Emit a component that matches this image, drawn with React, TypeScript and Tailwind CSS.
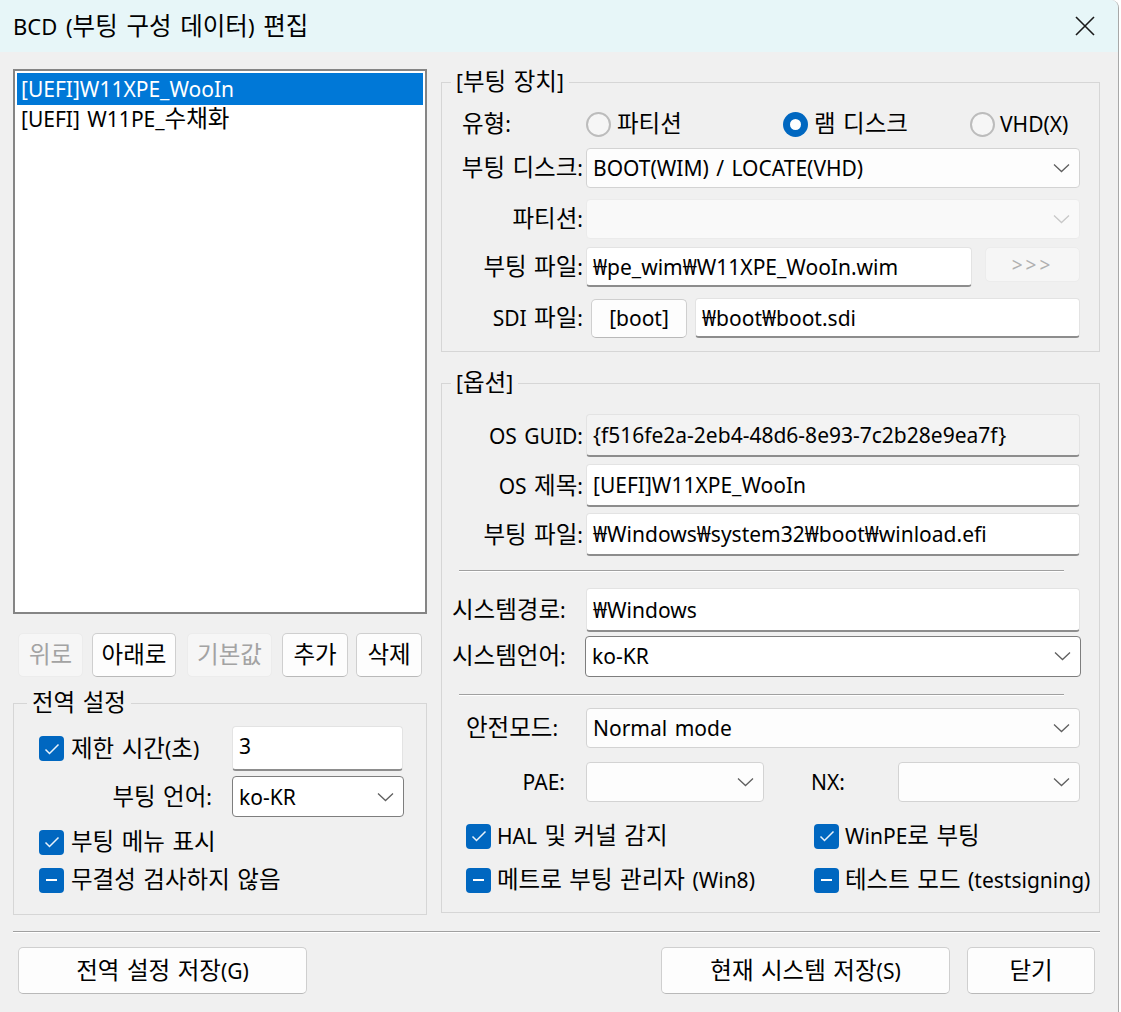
import React from "react";

const HANGUL = /([\u1100-\u11FF\u3130-\u318F\uAC00-\uD7AF]+)/;

function T({ s, k = "text-[23.5px] leading-[20px]" }: { s: string; k?: string }) {
  const parts = s.split(HANGUL);
  return (
    <span className="whitespace-nowrap">
      {parts.map((p, i) =>
        i % 2 === 1 ? (
          <span key={i} className={k}>
            {p}
          </span>
        ) : (
          <React.Fragment key={i}>{p}</React.Fragment>
        )
      )}
    </span>
  );
}

function Chevron({ disabled = false }: { disabled?: boolean }) {
  return (
    <svg width="17" height="10" viewBox="0 0 17 10" className="shrink-0">
      <path
        d="M1 1.5 L8.5 8.5 L16 1.5"
        fill="none"
        stroke={disabled ? "#c8c8c8" : "#5f5f5f"}
        strokeWidth="1.3"
      />
    </svg>
  );
}

function Check({ state }: { state: "checked" | "mixed" }) {
  return (
    <span className="w-[25px] h-[25px] rounded-[4px] bg-[#0067c0] flex items-center justify-center shrink-0">
      {state === "checked" ? (
        <svg width="16" height="12" viewBox="0 0 16 12">
          <path d="M1.5 6.5 L5.5 10.5 L14.5 1.5" fill="none" stroke="#eaf3fb" strokeWidth="1.5" />
        </svg>
      ) : (
        <span className="w-[11px] h-[2px] bg-white" />
      )}
    </span>
  );
}

function Radio({ checked = false }: { checked?: boolean }) {
  return checked ? (
    <span className="w-[25px] h-[25px] rounded-full bg-[#0067c0] flex items-center justify-center shrink-0">
      <span className="w-[11px] h-[11px] rounded-full bg-white" />
    </span>
  ) : (
    <span className="w-[25px] h-[25px] rounded-full border-2 border-[#bcbcbc] bg-[#f6f6f6] shrink-0" />
  );
}

function Combo({
  value = "",
  disabled = false,
  focus = false,
  className = "",
}: {
  value?: string;
  disabled?: boolean;
  focus?: boolean;
  className?: string;
}) {
  const border = disabled
    ? "border-[#ebebeb] bg-[#f9f9f9]"
    : focus
    ? "border-[#7e7e7e] bg-white"
    : "border-[#d3d3d3] bg-[#fdfdfd]";
  return (
    <div
      className={`flex items-center justify-between border rounded-[4px] pl-[6px] pr-[9px] ${border} ${className}`}
    >
      <span className="whitespace-nowrap">{value}</span>
      <Chevron disabled={disabled} />
    </div>
  );
}

function TextBox({
  value = "",
  readOnly = false,
  className = "",
}: {
  value?: string;
  readOnly?: boolean;
  className?: string;
}) {
  return (
    <div
      className={`flex items-center border border-[#e3e3e3] border-b-2 border-b-[#8d8d8d] rounded-[4px] pl-[6px] ${
        readOnly ? "bg-[#f3f3f3]" : "bg-white"
      } ${className}`}
    >
      <span className="whitespace-nowrap">{value}</span>
    </div>
  );
}

function Btn({
  children,
  disabled = false,
  className = "",
}: {
  children: React.ReactNode;
  disabled?: boolean;
  className?: string;
}) {
  return (
    <div
      className={`flex items-center justify-center rounded-[5px] border whitespace-nowrap ${
        disabled
          ? "bg-[#f6f6f6] border-[#ececec] text-[#a3a3a3]"
          : "bg-[#fdfdfd] border-[#cfcfcf] border-b-[#b9b9b9] text-black"
      } ${className}`}
    >
      <span>{children}</span>
    </div>
  );
}

function Sep({ className = "" }: { className?: string }) {
  return <div className={`h-[2px] border-t border-t-[#a0a0a0] border-b border-b-white ${className}`} />;
}

function Label({ s, className = "" }: { s: string; className?: string }) {
  return (
    <div className={`whitespace-nowrap shrink-0 ${className}`}>
      <T s={s} />
    </div>
  );
}

export default function App() {
  return (
    <div className="w-[1121px] h-[1012px] bg-white overflow-hidden">
      <div className="w-[1119px] h-[1012px] bg-[#f0f0f0] border-r border-r-[#a8a8a8] rounded-tr-[8px] overflow-hidden flex flex-col text-[21px] leading-[26px] [word-spacing:2px] text-black font-['Noto_Sans','Noto_Sans_CJK_KR',sans-serif]">
        {/* Title bar */}
        <div className="h-[52px] shrink-0 bg-[#e7f6f8] flex items-center justify-between pl-[13px] pr-[23px]">
          <span className="text-[22px] leading-[28px] whitespace-nowrap [word-spacing:3px]">
            <T s="BCD (부팅 구성 데이터) 편집" k="text-[24.5px] leading-[22px]" />
          </span>
          <svg width="20" height="20" viewBox="0 0 20 20">
            <path d="M1 1 L19 19 M19 1 L1 19" stroke="#1a1a1a" strokeWidth="1.6" fill="none" />
          </svg>
        </div>

        {/* Body */}
        <div className="flex items-start pl-[13px] pt-[17px] h-[863px] shrink-0">
          {/* Left column */}
          <div className="w-[414px] flex flex-col">
            <div className="h-[545px] border-2 border-[#858585] bg-white p-[2px] flex flex-col">
              <div className="h-[32px] bg-[#0078d7] text-white flex items-center pl-[4px] whitespace-nowrap">
                [UEFI]W11XPE_WooIn
              </div>
              <div className="h-[28px] flex items-center pl-[4px] whitespace-nowrap">
                <T s="[UEFI] W11PE_수채화" />
              </div>
            </div>

            <div className="flex mt-[19px] h-[44px] pl-[5px]">
              <Btn disabled className="w-[65px]"><T s="위로" /></Btn>
              <Btn className="w-[84px] ml-[9px]"><T s="아래로" /></Btn>
              <Btn disabled className="w-[85px] ml-[11px]"><T s="기본값" /></Btn>
              <Btn className="w-[66px] ml-[10px]"><T s="추가" /></Btn>
              <Btn className="w-[66px] ml-[8px]"><T s="삭제" /></Btn>
            </div>

            <fieldset className="mt-[14px] border border-[#d6d6d6] p-0 m-0 min-w-0">
              <legend className="ml-[13px] px-[5px] leading-[25px]"><T s="전역 설정" /></legend>
              <div className="flex flex-col pb-[19px]">
                <div className="flex items-center h-[45px] mt-[10px]">
                  <div className="w-[218px] flex items-center pl-[25px]">
                    <Check state="checked" />
                    <Label s="제한 시간(초)" className="ml-[7px]" />
                  </div>
                  <TextBox value="3" className="w-[171px] h-[45px] items-start pt-[6px]" />
                </div>
                <div className="flex items-center h-[41px] mt-[5px]">
                  <Label s="부팅 언어:" className="w-[218px] text-right pr-[20px]" />
                  <Combo value="ko-KR" focus className="w-[172px] h-[41px]" />
                </div>
                <div className="flex items-center h-[30px] mt-[10px] pl-[25px]">
                  <Check state="checked" />
                  <Label s="부팅 메뉴 표시" className="ml-[7px]" />
                </div>
                <div className="flex items-center h-[30px] mt-[8px] pl-[25px]">
                  <Check state="mixed" />
                  <Label s="무결성 검사하지 않음" className="ml-[7px]" />
                </div>
              </div>
            </fieldset>
          </div>

          {/* Right column */}
          <div className="w-[659px] ml-[14px] flex flex-col mt-[1px]">
            <fieldset className="border border-[#d6d6d6] p-0 m-0 min-w-0">
              <legend className="ml-[9px] px-[5px] leading-[25px]"><T s="[부팅 장치]" /></legend>
              <div className="flex flex-col pb-[13px] pr-[19px]">
                <div className="flex items-center h-[40px] mt-[9px]">
                  <Label s="유형:" className="w-[144px] pl-[20px]" />
                  <div className="w-[197px] flex items-center shrink-0">
                    <Radio />
                    <Label s="파티션" className="ml-[6px]" />
                  </div>
                  <div className="w-[187px] flex items-center shrink-0">
                    <Radio checked />
                    <Label s="램 디스크" className="ml-[6px]" />
                  </div>
                  <div className="flex items-center">
                    <Radio />
                    <Label s="VHD(X)" className="ml-[5px]" />
                  </div>
                </div>
                <div className="flex items-center h-[40px] mt-[4px]">
                  <Label s="부팅 디스크:" className="w-[144px] text-right pr-[3px]" />
                  <Combo value="BOOT(WIM) / LOCATE(VHD)" className="flex-1 h-[40px]" />
                </div>
                <div className="flex items-center h-[40px] mt-[11px]">
                  <Label s="파티션:" className="w-[144px] text-right pr-[3px]" />
                  <Combo disabled className="flex-1 h-[40px]" />
                </div>
                <div className="flex items-start h-[40px] mt-[8px]">
                  <div className="w-[144px] h-[40px] flex items-center justify-end pr-[3px] whitespace-nowrap shrink-0">
                    <T s="부팅 파일:" />
                  </div>
                  <TextBox value="₩pe_wim₩W11XPE_WooIn.wim" className="w-[386px] h-[40px]" />
                  <Btn disabled className="w-[95px] h-[35px] ml-[13px] text-[19px] tracking-[3px] text-[#b0b0b0]">&gt;&gt;&gt;</Btn>
                </div>
                <div className="flex items-center h-[40px] mt-[11px]">
                  <Label s="SDI 파일:" className="w-[144px] text-right pr-[3px]" />
                  <Btn className="w-[96px] h-[39px] ml-[5px]">[boot]</Btn>
                  <TextBox value="₩boot₩boot.sdi" className="flex-1 h-[40px] ml-[8px]" />
                </div>
              </div>
            </fieldset>

            <fieldset className="mt-[19px] border border-[#d6d6d6] p-0 m-0 min-w-0">
              <legend className="ml-[9px] px-[5px] leading-[25px]"><T s="[옵션]" /></legend>
              <div className="flex flex-col pb-[17px] pr-[19px]">
                <div className="flex items-center h-[43px] mt-[18px]">
                  <Label s="OS GUID:" className="w-[144px] text-right pr-[3px]" />
                  <TextBox readOnly value="{f516fe2a-2eb4-48d6-8e93-7c2b28e9ea7f}" className="flex-1 h-[43px]" />
                </div>
                <div className="flex items-center h-[43px] mt-[7px]">
                  <Label s="OS 제목:" className="w-[144px] text-right pr-[3px]" />
                  <TextBox value="[UEFI]W11XPE_WooIn" className="flex-1 h-[43px]" />
                </div>
                <div className="flex items-center h-[43px] mt-[6px]">
                  <Label s="부팅 파일:" className="w-[144px] text-right pr-[3px]" />
                  <TextBox value="₩Windows₩system32₩boot₩winload.efi" className="flex-1 h-[43px]" />
                </div>

                <Sep className="mt-[14px] ml-[17px] mr-[16px]" />

                <div className="flex items-center h-[44px] mt-[16px]">
                  <Label s="시스템경로:" className="w-[144px] pl-[10px]" />
                  <TextBox value="₩Windows" className="flex-1 h-[44px]" />
                </div>
                <div className="flex items-center h-[40px] mt-[4px]">
                  <Label s="시스템언어:" className="w-[144px] pl-[10px]" />
                  <Combo value="ko-KR" focus className="flex-1 h-[41px] -ml-[1px] -mr-[1px]" />
                </div>

                <Sep className="mt-[18px] ml-[17px] mr-[16px]" />

                <div className="flex items-center h-[40px] mt-[12px]">
                  <Label s="안전모드:" className="w-[144px] pl-[24px]" />
                  <Combo value="Normal mode" className="flex-1 h-[40px]" />
                </div>
                <div className="flex items-center h-[40px] mt-[14px]">
                  <Label s="PAE:" className="w-[144px] text-right pr-[21px]" />
                  <Combo className="w-[178px] h-[40px]" />
                  <Label s="NX:" className="w-[134px] pl-[47px]" />
                  <Combo className="flex-1 h-[40px]" />
                </div>
                <div className="flex items-center h-[30px] mt-[19px] pl-[24px]">
                  <div className="w-[348px] flex items-center shrink-0">
                    <Check state="checked" />
                    <Label s="HAL 및 커널 감지" className="ml-[6px]" />
                  </div>
                  <div className="flex items-center">
                    <Check state="checked" />
                    <Label s="WinPE로 부팅" className="ml-[6px]" />
                  </div>
                </div>
                <div className="flex items-center h-[30px] mt-[14px] pl-[24px]">
                  <div className="w-[348px] flex items-center shrink-0">
                    <Check state="mixed" />
                    <Label s="메트로 부팅 관리자 (Win8)" className="ml-[6px]" />
                  </div>
                  <div className="flex items-center">
                    <Check state="mixed" />
                    <Label s="테스트 모드 (testsigning)" className="ml-[6px]" />
                  </div>
                </div>
              </div>
            </fieldset>
          </div>
        </div>

        {/* Bottom */}
        <Sep className="mt-[16px] ml-[13px] w-[1087px] shrink-0" />
        <div className="flex items-center justify-between mt-[14px] h-[47px] pl-[18px] pr-[23px] shrink-0">
          <Btn className="w-[289px] h-[47px]"><T s="전역 설정 저장(G)" /></Btn>
          <div className="flex">
            <Btn className="w-[289px] h-[47px]"><T s="현재 시스템 저장(S)" /></Btn>
            <Btn className="w-[128px] h-[47px] ml-[17px]"><T s="닫기" /></Btn>
          </div>
        </div>
      </div>
    </div>
  );
}
